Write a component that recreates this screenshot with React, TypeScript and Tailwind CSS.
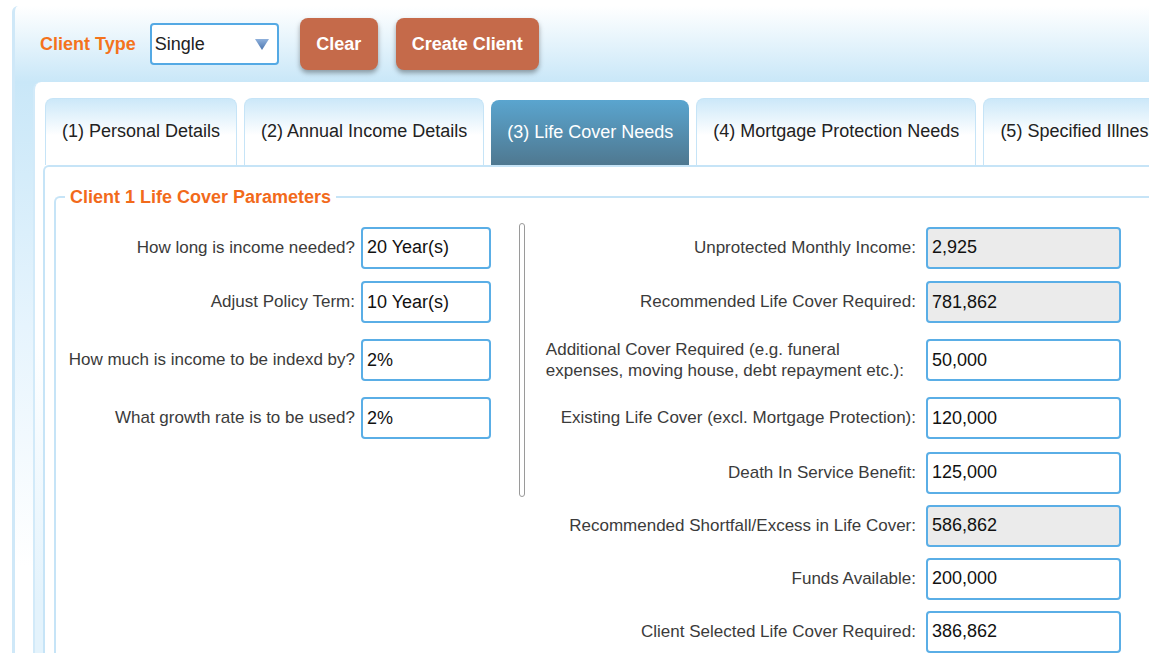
import { useState } from 'react';

type Field = {
  label: string;
  value: string;
  readOnly?: boolean;
  wrap?: [string, string];
  row: string;
};

const tabs = [
  '(1) Personal Details',
  '(2) Annual Income Details',
  '(3) Life Cover Needs',
  '(4) Mortgage Protection Needs',
  '(5) Specified Illness Needs',
];

const leftFields: Field[] = [
  { label: 'How long is income needed?', value: '20 Year(s)', row: 'row-start-1' },
  { label: 'Adjust Policy Term:', value: '10 Year(s)', row: 'row-start-2' },
  { label: 'How much is income to be indexd by?', value: '2%', row: 'row-start-3' },
  { label: 'What growth rate is to be used?', value: '2%', row: 'row-start-4' },
];

const rightFields: Field[] = [
  { label: 'Unprotected Monthly Income:', value: '2,925', readOnly: true, row: 'row-start-1' },
  { label: 'Recommended Life Cover Required:', value: '781,862', readOnly: true, row: 'row-start-2' },
  {
    label: '',
    wrap: ['Additional Cover Required (e.g. funeral', 'expenses, moving house, debt repayment etc.):'],
    value: '50,000',
    row: 'row-start-3',
  },
  { label: 'Existing Life Cover (excl. Mortgage Protection):', value: '120,000', row: 'row-start-4' },
  { label: 'Death In Service Benefit:', value: '125,000', row: 'row-start-5' },
  { label: 'Recommended Shortfall/Excess in Life Cover:', value: '586,862', readOnly: true, row: 'row-start-6' },
  { label: 'Funds Available:', value: '200,000', row: 'row-start-7' },
  { label: 'Client Selected Life Cover Required:', value: '386,862', row: 'row-start-8' },
];

const TextBox = ({ value, readOnly, className }: { value: string; readOnly?: boolean; className: string }) => (
  <input
    defaultValue={value}
    readOnly={readOnly}
    className={`${className} h-[42px] self-center rounded-[4px] border-2 border-[#5aaee6] px-[4px] text-[18px] text-[#111] outline-none ${
      readOnly ? 'bg-[#ebebeb]' : 'bg-white'
    }`}
  />
);

export default function App() {
  const [active, setActive] = useState(2);

  return (
    <div className="h-[653px] w-[1149px] overflow-hidden bg-white pl-[12px] pt-[6px] font-['Liberation_Sans',Arial,sans-serif]">
      <div className="h-[720px] w-[1220px] rounded-tl-[6px] border-l-[3px] border-[#cfe8f8] bg-[linear-gradient(180deg,#ffffff_0px,#c9e7f8_76px,#e6f4fd_320px,#ffffff_560px)]">
        {/* toolbar */}
        <div className="flex h-[76px] items-center pl-[25px]">
          <span className="text-[18px] font-bold text-[#f4731c]">Client Type</span>
          <div className="ml-[14px] flex h-[42px] w-[129px] items-center justify-between rounded-[4px] border-2 border-[#54a9e4] bg-white pl-[3px] pr-[8px]">
            <span className="text-[18px] text-[#222]">Single</span>
            <svg width="14" height="11" viewBox="0 0 14 11">
              <defs>
                <linearGradient id="arrowFill" x1="0" y1="0" x2="0" y2="1">
                  <stop offset="0" stopColor="#8fb1dc" />
                  <stop offset="1" stopColor="#4b75ae" />
                </linearGradient>
              </defs>
              <polygon points="0,0 14,0 7,11" fill="url(#arrowFill)" />
            </svg>
          </div>
          <button className="ml-[21px] h-[52px] w-[78px] rounded-[8px] bg-[#c56a4a] text-[18px] font-bold text-white shadow-[0_3px_5px_rgba(0,0,0,0.35)]">
            Clear
          </button>
          <button className="ml-[18px] h-[52px] w-[143px] rounded-[8px] bg-[#c56a4a] text-[18px] font-bold text-white shadow-[0_3px_5px_rgba(0,0,0,0.35)]">
            Create Client
          </button>
        </div>

        {/* tab widget */}
        <div className="ml-[18px] h-[640px] rounded-tl-[8px] border-l-2 border-[#d2eaf9] bg-[linear-gradient(180deg,#ffffff_0px,#ffffff_260px,#e4f3fc_520px)] pl-[8px] pt-[16px]">
          <div className="flex h-[67px] items-end gap-[7px] pl-[2px]">
            {tabs.map((t, i) =>
              i === active ? (
                <button
                  key={t}
                  onClick={() => setActive(i)}
                  className="flex h-[65px] shrink-0 items-center whitespace-nowrap rounded-t-[8px] bg-[linear-gradient(180deg,#5aa5cf,#4f7890)] px-[16px] text-[18px] text-white"
                >
                  {t}
                </button>
              ) : (
                <button
                  key={t}
                  onClick={() => setActive(i)}
                  className="flex h-[67px] shrink-0 items-center whitespace-nowrap rounded-t-[8px] border border-b-0 border-[#c6e4f7] bg-[linear-gradient(180deg,#cce8f9_0%,#ffffff_55%,#ffffff_100%)] px-4 pb-[2px] text-[18px] text-[#222]"
                >
                  {t}
                </button>
              )
            )}
          </div>

          {/* tab panel */}
          <div className="h-[600px] rounded-tl-[6px] border-l-2 border-t-2 border-[#c6e4f7] bg-white pl-[9px] pt-[19px]">
            <fieldset className="h-[560px] rounded-tl-[6px] border-l-2 border-t-2 border-[#c6e4f7] pl-[2px]">
              <legend className="ml-[7px] px-[5px] text-[18px] font-bold leading-[22px] text-[#f26a1b]">
                Client 1 Life Cover Parameters
              </legend>

              <div className="mt-[13px] grid grid-cols-[303px_130px_39px_396px_195px] grid-rows-[53px_56px_60px_56px_53px_53px_53px_53px] text-[17px] text-[#3b3b3b]">
                {leftFields.map((f) => (
                  <div key={f.label} className="contents">
                    <div className={`${f.row} col-start-1 self-center whitespace-nowrap pr-[6px] text-right`}>{f.label}</div>
                    <TextBox value={f.value} className={`${f.row} col-start-2 w-[130px]`} />
                  </div>
                ))}

                <div className="col-start-3 row-span-5 row-start-1 my-[2px] ml-[28px] w-[6px] rounded-full border-[1.5px] border-[#9a9a9a] bg-white" />

                {rightFields.map((f) => (
                  <div key={f.value} className="contents">
                    {f.wrap ? (
                      <div className={`${f.row} col-start-4 self-center justify-self-end pr-[22px] text-left leading-[21px]`}>
                        {f.wrap[0]}
                        <br />
                        {f.wrap[1]}
                      </div>
                    ) : (
                      <div className={`${f.row} col-start-4 self-center whitespace-nowrap pr-[10px] text-right`}>{f.label}</div>
                    )}
                    <TextBox value={f.value} readOnly={f.readOnly} className={`${f.row} col-start-5 w-[195px]`} />
                  </div>
                ))}
              </div>
            </fieldset>
          </div>
        </div>
      </div>
    </div>
  );
}
